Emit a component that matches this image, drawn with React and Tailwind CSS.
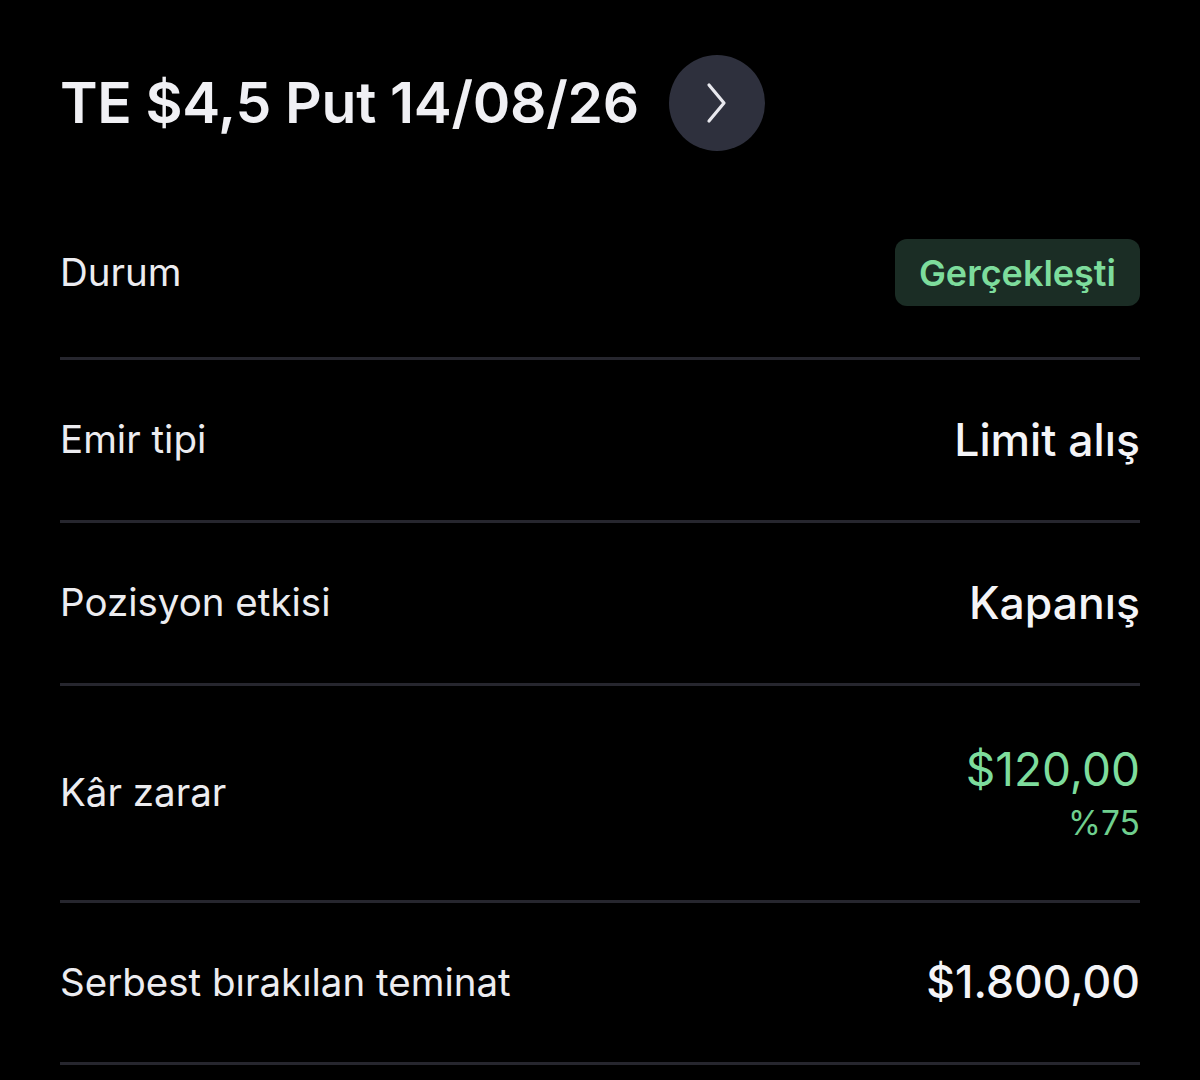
import React from "react";

const rows = [
  { label: "Emir tipi", value: "Limit alış" },
  { label: "Pozisyon etkisi", value: "Kapanış" },
];

const Divider = () => <div className="h-[3px] bg-[#26262e]" />;

export default function App() {
  return (
    <div
      className="min-h-[1080px] w-[1200px] overflow-hidden bg-black px-[60px] pt-[55px] text-[#ececf0]"
      style={{ fontFamily: "Inter, 'Noto Sans', sans-serif" }}
    >
      {/* header */}
      <div className="flex h-[96px] items-center gap-[30px]">
        <h1 className="text-[57px] font-semibold leading-[96px] tracking-[-0.3px] text-[#f0f0f4]">
          TE $4,5 Put 14/08/26
        </h1>
        <button className="flex h-[96px] w-[96px] shrink-0 items-center justify-center rounded-full bg-[#2e303d]">
          <svg width="30" height="44" viewBox="0 0 30 44" fill="none">
            <path
              d="M7 4 L22 22 L7 40"
              stroke="#e8e8ee"
              strokeWidth="3.2"
              strokeLinecap="round"
              strokeLinejoin="round"
            />
          </svg>
        </button>
      </div>

      {/* Durum */}
      <div className="mt-[43px] flex h-[163px] items-center justify-between pb-[6px]">
        <span className="text-[38.5px]">Durum</span>
        <span className="flex h-[67px] items-center rounded-[12px] bg-[#1b2d25] px-[24px] text-[36px] font-semibold text-[#7ddc9c]">
          Gerçekleşti
        </span>
      </div>
      <Divider />

      {rows.map((r) => (
        <React.Fragment key={r.label}>
          <div className="flex h-[160px] items-center justify-between">
            <span className="text-[38.5px]">{r.label}</span>
            <span className="text-[44.5px] font-medium text-[#f4f4f7]">{r.value}</span>
          </div>
          <Divider />
        </React.Fragment>
      ))}

      {/* Kâr zarar */}
      <div className="flex h-[214px] items-center justify-between">
        <span className="text-[38.5px]">Kâr zarar</span>
        <div className="flex flex-col items-end">
          <span className="text-[46px] font-normal leading-[52px] text-[#7ddc9c]">$120,00</span>
          <span className="mt-[8px] text-[33.5px] leading-[40px] text-[#6fcf8e]">%75</span>
        </div>
      </div>
      <Divider />

      <div className="flex h-[159px] items-center justify-between">
        <span className="text-[38.5px]">Serbest bırakılan teminat</span>
        <span className="text-[44.5px] font-medium text-[#f4f4f7]">$1.800,00</span>
      </div>
      <Divider />
    </div>
  );
}
